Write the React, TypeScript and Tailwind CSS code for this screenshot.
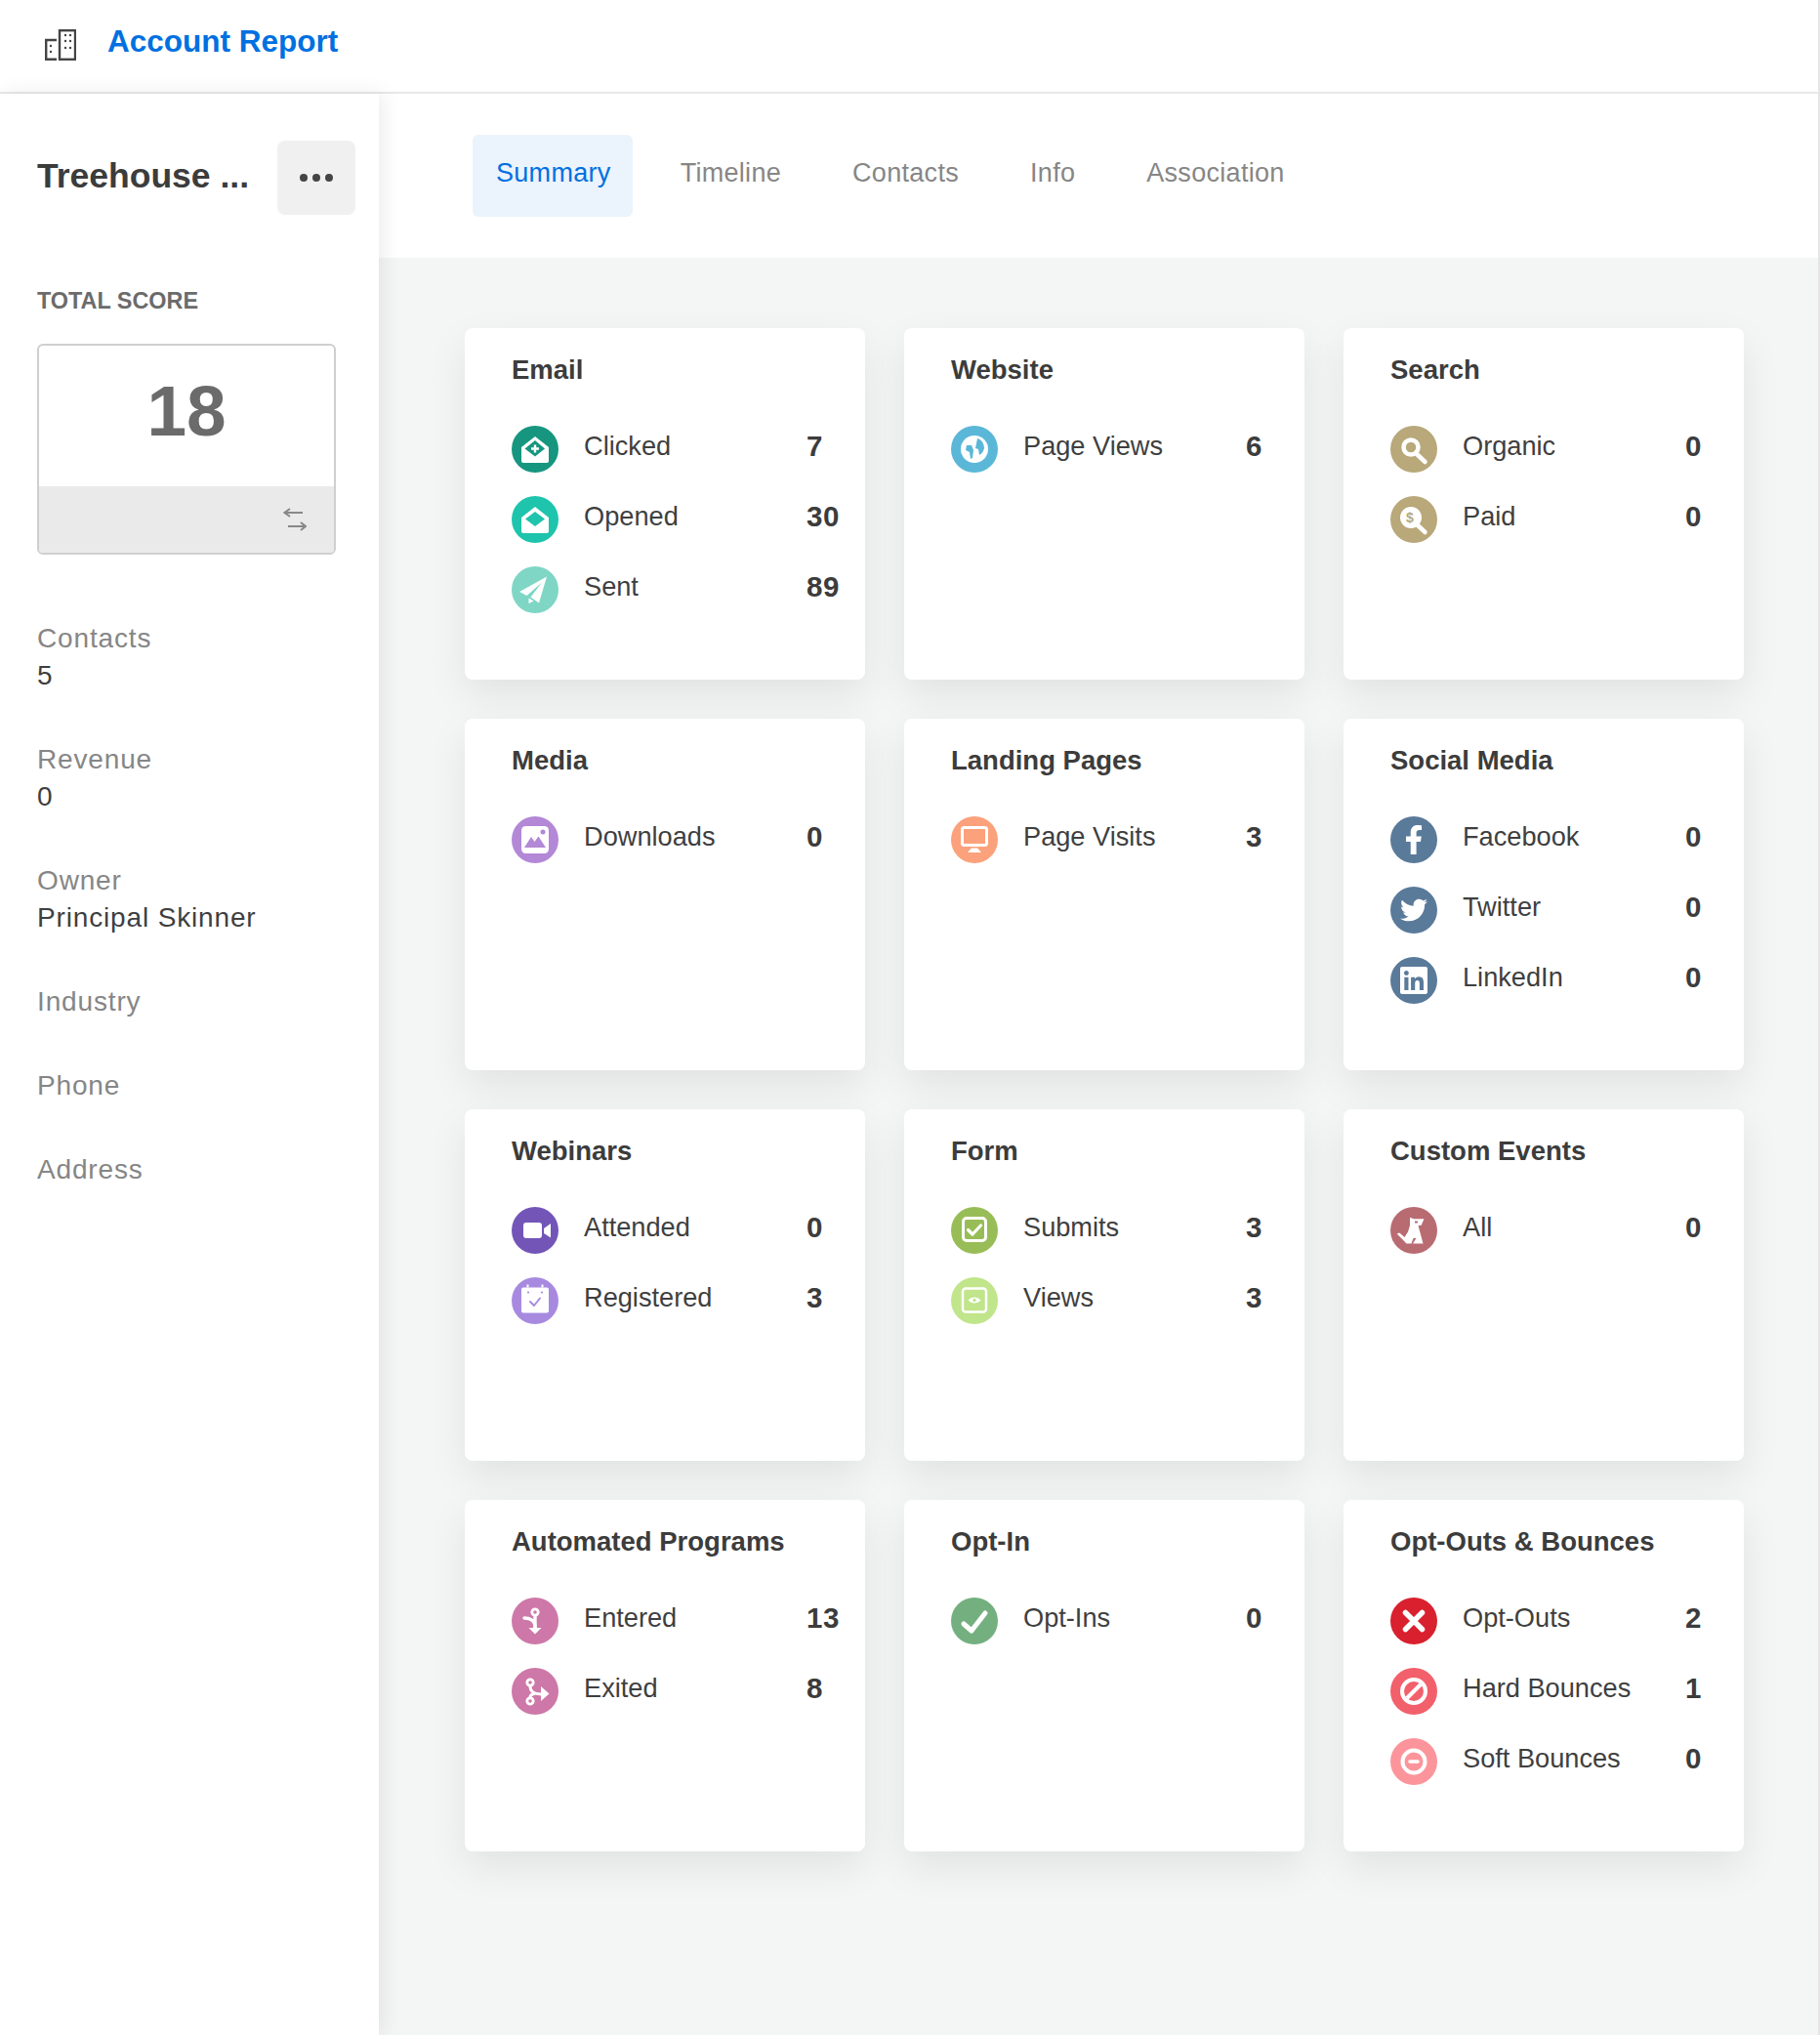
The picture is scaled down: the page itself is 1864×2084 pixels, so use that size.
import type { ReactNode } from 'react'
import { FaFacebookF, FaTwitter, FaLinkedin } from 'react-icons/fa'

function Glyph({ color, children }: { color: string; children: ReactNode }) {
  return (
    <svg viewBox="0 0 48 48" className="h-12 w-12 shrink-0" fill="none">
      <circle cx="24" cy="24" r="24" fill={color} />
      {children}
    </svg>
  )
}

const envelope = 'M24 11 L38 22 V36 a2 2 0 0 1-2 2 H12 a2 2 0 0 1-2-2 V22 Z'

const stroke = { stroke: '#fff', strokeLinecap: 'round', strokeLinejoin: 'round' } as const

const icons: Record<string, ReactNode> = {
  clicked: (
    <Glyph color="#17967f">
      <path d={envelope} fill="#fff" />
      <path d="M24 15 L34 23.5 L24 31.5 L13.5 23.5 Z" fill="#17967f" />
      <path d="M24 19.5 V27.5 M20 23.5 H28" stroke="#fff" strokeWidth="2.4" />
    </Glyph>
  ),
  opened: (
    <Glyph color="#1ec4ac">
      <path d={envelope} fill="#fff" />
      <path d="M24 16 L34 23.5 L24 31 L14 23.5 Z" fill="#1ec4ac" />
    </Glyph>
  ),
  sent: (
    <Glyph color="#7fd6c5">
      <path d="M36 10.5 L8 26 L15.5 30 L31 16.5 L19.5 31.5 L28 37.5 Z" fill="#fff" />
      <path d="M17.5 32.5 V38 L22.5 35.5 Z" fill="#fff" />
    </Glyph>
  ),
  views: (
    <Glyph color="#5bb7d8">
      <circle cx="24" cy="24" r="14" fill="#fff" />
      <path d="M27 13 C31 14 34 18 34 23 C33 27 31 29 29 30 L28 24 L25 23 L26 18 Z" fill="#5bb7d8" />
      <path d="M16 20 L21 20 L23 25 L22 33 L20 34 L19 27 L15 25 Z" fill="#5bb7d8" />
    </Glyph>
  ),
  organic: (
    <Glyph color="#b8a87a">
      <circle cx="21" cy="22" r="7.5" stroke="#fff" strokeWidth="4.5" />
      <path d="M27 29 L35.5 37" {...stroke} strokeWidth="4.5" />
    </Glyph>
  ),
  paid: (
    <Glyph color="#b8a87a">
      <circle cx="21" cy="22" r="11" fill="#fff" />
      <path d="M27 29 L35.5 37" {...stroke} strokeWidth="4.5" />
      <text x="20" y="27" textAnchor="middle" fontSize="14" fontWeight="700" fontFamily="Liberation Sans" fill="#b8a87a">$</text>
    </Glyph>
  ),
  downloads: (
    <Glyph color="#b388d6">
      <rect x="10" y="10" width="28" height="28" rx="4.5" fill="#fff" />
      <circle cx="32" cy="16" r="2.5" fill="#b388d6" />
      <path d="M13 32 L20 21 L23.5 26 L27.5 20.5 L35 32 Z" fill="#b388d6" />
    </Glyph>
  ),
  visits: (
    <Glyph color="#fba27c">
      <rect x="11.5" y="11.5" width="25" height="18" rx="2" stroke="#fff" strokeWidth="3" />
      <path d="M21 32.5 H27 L31 37 H17 Z" fill="#fff" />
    </Glyph>
  ),
  facebook: (
    <Glyph color="#5a7a9a">
      <foreignObject x="9" y="8.5" width="30" height="30">
        <FaFacebookF className="h-[30px] w-[30px] text-white" />
      </foreignObject>
    </Glyph>
  ),
  twitter: (
    <Glyph color="#5a7a9a">
      <foreignObject x="10" y="10" width="28" height="28">
        <FaTwitter className="h-7 w-7 text-white" />
      </foreignObject>
    </Glyph>
  ),
  linkedin: (
    <Glyph color="#5a7a9a">
      <foreignObject x="8" y="8" width="32" height="32">
        <FaLinkedin className="h-8 w-8 text-white" />
      </foreignObject>
    </Glyph>
  ),
  attended: (
    <Glyph color="#7355b8">
      <rect x="12" y="16" width="19" height="16" rx="3" fill="#fff" />
      <path d="M33 22 L40 17 V31.5 L33 27 Z" fill="#fff" />
    </Glyph>
  ),
  registered: (
    <Glyph color="#a78ae0">
      <rect x="10" y="10.5" width="28" height="26" rx="2" fill="#fff" />
      <path d="M16.5 7.5 V10.5 M31.5 7.5 V10.5" stroke="#fff" strokeWidth="2" />
      <circle cx="17" cy="15.5" r="1.1" fill="#a78ae0" />
      <circle cx="31" cy="15.5" r="1.1" fill="#a78ae0" />
      <path d="M19 25 L23 29 L29 21.5" stroke="#a78ae0" strokeWidth="2" strokeLinecap="round" strokeLinejoin="round" />
    </Glyph>
  ),
  submits: (
    <Glyph color="#98bd57">
      <rect x="12.5" y="11.5" width="23" height="23" rx="3.5" stroke="#fff" strokeWidth="3" />
      <path d="M17.5 23.5 L22 28 L30.5 19" {...stroke} strokeWidth="3.2" />
    </Glyph>
  ),
  formViews: (
    <Glyph color="#c0e58a">
      <rect x="12" y="11.5" width="24" height="24" rx="3" stroke="#fff" strokeWidth="2.5" />
      <path d="M17.5 23.5 C21 19.5 27 19.5 30.5 23.5 C27 27.5 21 27.5 17.5 23.5 Z" fill="#fff" />
      <circle cx="24" cy="23.5" r="1.7" fill="#c0e58a" />
    </Glyph>
  ),
  all: (
    <Glyph color="#b96b72">
      <path d="M20 10.7 L24 12.3 H34.5 L31.5 19 H28.5 L33.5 37.5 H23 L26.5 32 H23.5 L21.5 37.5 H16.5 L6.7 27.5 L9.3 26.5 L14.5 31 L18 25.5 L20 19 Z" fill="#fff" />
      <rect x="25" y="14.5" width="3" height="2" fill="#b96b72" />
    </Glyph>
  ),
  entered: (
    <Glyph color="#cd78a8">
      <circle cx="24" cy="15" r="3.2" stroke="#fff" strokeWidth="2.8" />
      <path d="M24 19 V32" stroke="#fff" strokeWidth="3.4" />
      <path d="M13 21 C18 21 24 23 24 30" stroke="#fff" strokeWidth="3.4" strokeLinecap="round" />
      <path d="M17.5 31 H30.5 L24 37.5 Z" fill="#fff" />
    </Glyph>
  ),
  exited: (
    <Glyph color="#cd78a8">
      <circle cx="19" cy="15" r="3.2" stroke="#fff" strokeWidth="2.8" />
      <circle cx="19" cy="34" r="3.2" stroke="#fff" strokeWidth="2.8" />
      <path d="M19 19 C19 24 23 27 30 27 M19 30 C19 29 20 27 24 26.5" stroke="#fff" strokeWidth="3" />
      <path d="M30 19 L38.5 26.5 L30 34 Z" fill="#fff" />
    </Glyph>
  ),
  optIn: (
    <Glyph color="#74b07f">
      <path d="M13 27 L21 34 L35 16" {...stroke} strokeWidth="5" />
    </Glyph>
  ),
  optOut: (
    <Glyph color="#d9202e">
      <path d="M15.5 15.5 L32.5 32.5 M32.5 15.5 L15.5 32.5" {...stroke} strokeWidth="5.5" />
    </Glyph>
  ),
  hard: (
    <Glyph color="#f2606b">
      <circle cx="24" cy="24" r="12" stroke="#fff" strokeWidth="4" />
      <path d="M31 17 L17 31" stroke="#fff" strokeWidth="4" />
    </Glyph>
  ),
  soft: (
    <Glyph color="#fc959b">
      <circle cx="24" cy="24" r="11.5" stroke="#fff" strokeWidth="4" />
      <path d="M20 24 H28" {...stroke} strokeWidth="3.6" />
    </Glyph>
  ),
}

const cards: { title: string; rows: [string, string, number][] }[] = [
  { title: 'Email', rows: [['clicked', 'Clicked', 7], ['opened', 'Opened', 30], ['sent', 'Sent', 89]] },
  { title: 'Website', rows: [['views', 'Page Views', 6]] },
  { title: 'Search', rows: [['organic', 'Organic', 0], ['paid', 'Paid', 0]] },
  { title: 'Media', rows: [['downloads', 'Downloads', 0]] },
  { title: 'Landing Pages', rows: [['visits', 'Page Visits', 3]] },
  { title: 'Social Media', rows: [['facebook', 'Facebook', 0], ['twitter', 'Twitter', 0], ['linkedin', 'LinkedIn', 0]] },
  { title: 'Webinars', rows: [['attended', 'Attended', 0], ['registered', 'Registered', 3]] },
  { title: 'Form', rows: [['submits', 'Submits', 3], ['formViews', 'Views', 3]] },
  { title: 'Custom Events', rows: [['all', 'All', 0]] },
  { title: 'Automated Programs', rows: [['entered', 'Entered', 13], ['exited', 'Exited', 8]] },
  { title: 'Opt-In', rows: [['optIn', 'Opt-Ins', 0]] },
  { title: 'Opt-Outs & Bounces', rows: [['optOut', 'Opt-Outs', 2], ['hard', 'Hard Bounces', 1], ['soft', 'Soft Bounces', 0]] },
]

const fields = [
  ['Contacts', '5'],
  ['Revenue', '0'],
  ['Owner', 'Principal Skinner'],
  ['Industry', ''],
  ['Phone', ''],
  ['Address', ''],
]

const tabs = ['Timeline', 'Contacts', 'Info', 'Association']

function StatCard({ title, rows }: { title: string; rows: [string, string, number][] }) {
  return (
    <div className="h-[360px] rounded-lg bg-white pl-12 pt-[28px] shadow-[0_16px_40px_rgba(0,0,0,0.08)]">
      <h3 className="text-[27.5px] font-bold leading-[30px] text-[#3c3c3c]">{title}</h3>
      <div className="mt-[42px] flex flex-col gap-6">
        {rows.map(([icon, label, value]) => (
          <div key={label} className="flex h-12 items-start">
            {icons[icon]}
            <span className="ml-[26px] w-[228px] text-[27.2px] leading-[42px] text-[#3f3f3f]">{label}</span>
            <span className="text-[29.5px] font-bold leading-[42px] tracking-[0.5px] text-[#3c3c3c]">{value}</span>
          </div>
        ))}
      </div>
    </div>
  )
}

export default function App() {
  return (
    <div className="flex h-[2084px] w-[1864px] flex-col border-r-2 border-[#e6e6e6] bg-white font-['Liberation_Sans',sans-serif]">
      <header className="flex h-[96px] shrink-0 items-center border-b-2 border-[#e8e8e8] pb-[3px] pl-[46px]">
        <svg viewBox="0 0 32 32" className="h-8 w-8" fill="none" stroke="#444" strokeWidth="2.4">
          <rect x="15" y="1.2" width="16" height="29.6" />
          <path d="M12 11 H1.2 V30.8 H12" />
          <g fill="#444" stroke="none">
            <circle cx="21" cy="6" r="1.2" /><circle cx="26" cy="6" r="1.2" />
            <circle cx="21" cy="12" r="1.2" /><circle cx="26" cy="12" r="1.2" />
            <circle cx="21" cy="19" r="1.2" /><circle cx="26" cy="19" r="1.2" />
            <circle cx="6" cy="17" r="1.2" /><circle cx="6" cy="23" r="1.2" />
          </g>
        </svg>
        <h1 className="mb-[5px] ml-8 text-[31.5px] font-bold text-[#0070e0]">Account Report</h1>
      </header>

      <div className="flex min-h-0 flex-1">
        <aside className="relative z-10 w-[388px] shrink-0 bg-white pl-[38px] pt-12 shadow-[4px_0_20px_rgba(0,0,0,0.08)]">
          <div className="flex items-center">
            <h2 className="mb-[3px] w-[246px] text-[35.5px] font-bold text-[#3c3c3c]">Treehouse ...</h2>
            <button className="flex h-[76px] w-20 items-center justify-center rounded-lg bg-[#f0f0f0]">
              <svg viewBox="0 0 34 8" className="h-2 w-[34px]" fill="#444">
                <circle cx="4" cy="4" r="4" /><circle cx="17" cy="4" r="4" /><circle cx="30" cy="4" r="4" />
              </svg>
            </button>
          </div>

          <p className="mt-[74px] text-[23.4px] font-bold leading-[28px] text-[#6b6b6b]">TOTAL SCORE</p>
          <div className="mt-[30px] flex h-[216px] w-[306px] flex-col overflow-hidden rounded-md border-2 border-[#cfcfcf]">
            <div className="flex h-[144px] items-center justify-center pb-[11px] text-[73px] font-bold text-[#6b6b6b]">18</div>
            <div className="flex flex-1 items-center justify-end bg-[#eaeaea] pr-[28px]">
              <svg viewBox="0 0 24 25" className="h-[25px] w-6" fill="none" stroke="#888" strokeWidth="2">
                <path d="M20 5 H1.5 M7 1 L1.5 5 L7 9" />
                <path d="M5 19 H23 M18 15 L23 19 L18 23" />
              </svg>
            </div>
          </div>

          <dl className="mt-[67px] flex flex-col gap-12">
            {fields.map(([name, value]) => (
              <div key={name} className="text-[28px] leading-[38px] tracking-[0.85px]">
                <dt className="text-[#868686]">{name}</dt>
                {value && <dd className="text-[#3f3f3f]">{value}</dd>}
              </div>
            ))}
          </dl>
        </aside>

        <main className="flex-1 bg-[#f4f5f5]">
          <nav className="flex h-[168px] items-start gap-[25px] bg-white pl-[96px] pt-[42px]">
            <span className="flex h-[84px] items-center rounded-md bg-[#ebf3fc] pb-[5px] pl-6 pr-[22px] text-[27px] tracking-[0.3px] text-[#0070e0]">Summary</span>
            {tabs.map((tab) => (
              <span key={tab} className="flex h-[84px] items-center px-6 pb-[5px] text-[27px] tracking-[0.3px] text-[#868686]">{tab}</span>
            ))}
          </nav>
          <div className="grid grid-cols-[410px_410px_410px] gap-10 pl-[88px] pt-[72px]">
            {cards.map((card) => (
              <StatCard key={card.title} title={card.title} rows={card.rows} />
            ))}
          </div>
        </main>
      </div>
    </div>
  )
}
